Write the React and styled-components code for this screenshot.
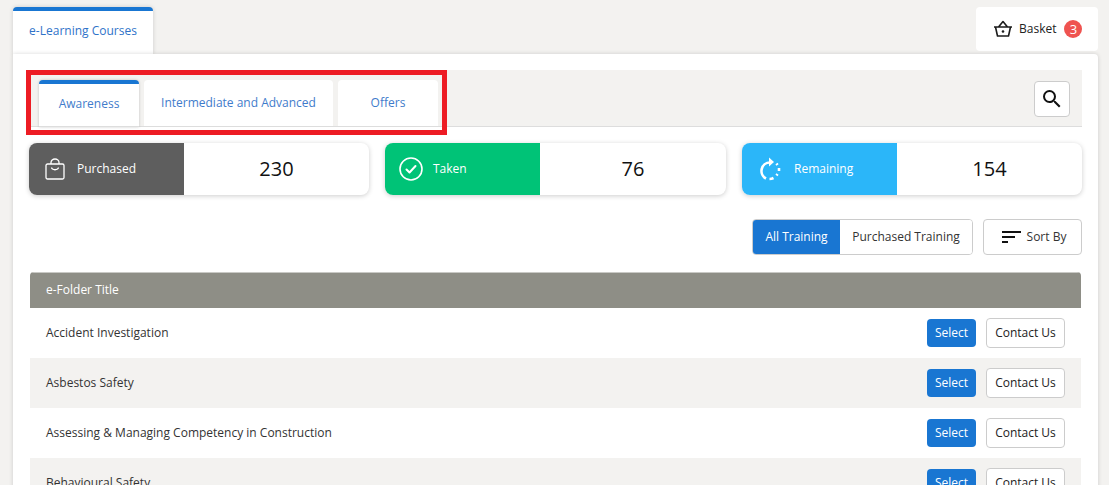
import styled, { createGlobalStyle } from "styled-components";
import { MdSearch } from "react-icons/md";

const GlobalStyle = createGlobalStyle`
  html, body {
    margin: 0;
    height: 485px;
    overflow: hidden;
    background: #f3f2f0;
    font-family: "Open Sans", "Liberation Sans", sans-serif;
    font-size: 12px;
    color: #222;
  }
  * {
    box-sizing: border-box;
  }
`;

const Page = styled.div`
  padding: 7px 11px 0 13px;
`;

const TopBar = styled.div`
  display: flex;
  justify-content: space-between;
  align-items: flex-start;
  height: 47px;
`;

const MainTab = styled.div`
  display: flex;
  align-items: center;
  justify-content: center;
  width: 140px;
  height: 47px;
  padding-bottom: 4px;
  background: #fff;
  border-top: 4px solid #1976d2;
  border-radius: 4px 4px 0 0;
  box-shadow: 0 0 4px rgba(0, 0, 0, 0.16);
  color: #2f73c9;
  position: relative;
  z-index: 1;
`;

const BasketBox = styled.div`
  display: flex;
  align-items: center;
  width: 122px;
  height: 44px;
  padding-left: 17px;
  background: #fff;
  border-radius: 4px;
`;

const BasketLabel = styled.span`
  margin-left: 6px;
  margin-bottom: 1px;
  color: #222;
`;

const Badge = styled.span`
  display: flex;
  align-items: center;
  justify-content: center;
  width: 18px;
  height: 18px;
  margin-left: 8px;
  border-radius: 50%;
  background: #ef5350;
  color: #fff;
  font-size: 13px;
`;

const Panel = styled.div`
  position: relative;
  z-index: 2;
  height: 440px;
  padding: 16px 16px 0;
  background: #fff;
  border-radius: 0 4px 0 0;
  box-shadow: 0 0 4px rgba(0, 0, 0, 0.16);
`;

const TabBar = styled.div`
  display: flex;
  justify-content: space-between;
  height: 57px;
  padding: 10px 12px 0 10px;
  background: #f3f2f0;
  border-bottom: 1px solid #ddd;
`;

const Tabs = styled.div`
  display: flex;
  gap: 5px;
`;

const SubTab = styled.div`
  display: flex;
  align-items: center;
  justify-content: center;
  width: ${(props) => props.$width}px;
  height: 47px;
  padding-bottom: ${(props) => (props.$active ? "4px" : "2px")};
  background: #fff;
  border-top: ${(props) => (props.$active ? "4px solid #1976d2" : "none")};
  border-bottom: 1px solid #ddd;
  border-radius: 4px 4px 0 0;
  box-shadow: ${(props) => (props.$active ? "0 0 3px rgba(0, 0, 0, 0.2)" : "none")};
  color: #3f7ccb;
`;

const SearchButton = styled.button`
  display: flex;
  align-items: center;
  justify-content: center;
  width: 36px;
  height: 36px;
  margin-top: 1px;
  padding: 0;
  background: #fff;
  border: 1px solid #ccc;
  border-radius: 4px;
  color: #111;
  font-size: 24px;
`;

const Highlight = styled.div`
  position: absolute;
  left: 13px;
  top: 16px;
  width: 421px;
  height: 65px;
  border: 5px solid #ed1c24;
  pointer-events: none;
`;

const Stats = styled.div`
  display: flex;
  justify-content: space-between;
  margin-top: 16px;
`;

const StatCard = styled.div`
  display: flex;
  width: ${(props) => props.$width}px;
  height: 52px;
  border-radius: 8px;
  background: #fff;
  overflow: hidden;
  box-shadow: 0 1px 5px rgba(0, 0, 0, 0.2);
`;

const StatLabel = styled.div`
  display: flex;
  align-items: center;
  flex: 0 0 155px;
  padding-left: ${(props) => props.$pad}px;
  gap: ${(props) => props.$gap}px;
  background: ${(props) => props.$bg};
  color: #fff;
`;

const StatText = styled.span`
  margin-bottom: 2px;
`;

const StatValue = styled.div`
  flex: 1;
  display: flex;
  align-items: center;
  justify-content: center;
  padding-bottom: 2px;
  font-size: 20px;
  font-weight: 500;
  color: #111;
`;

const Filters = styled.div`
  display: flex;
  justify-content: flex-end;
  gap: 10px;
  margin-top: 24px;
`;

const Segmented = styled.div`
  display: flex;
  height: 36px;
  border: 1px solid #ccc;
  border-radius: 4px;
  overflow: hidden;
`;

const Segment = styled.div`
  display: flex;
  align-items: center;
  justify-content: center;
  width: ${(props) => props.$width}px;
  padding-bottom: 1px;
  background: ${(props) => (props.$active ? "#1976d2" : "#fff")};
  color: ${(props) => (props.$active ? "#fff" : "#333")};
`;

const SortButton = styled.div`
  display: flex;
  align-items: center;
  justify-content: center;
  gap: 6px;
  width: 99px;
  height: 36px;
  padding-left: 3px;
  border: 1px solid #ccc;
  border-radius: 4px;
  color: #333;
`;

const SortText = styled.span`
  margin-bottom: 1px;
`;

const Table = styled.div`
  margin: 17px 1px 0;
  border-radius: 4px 4px 0 0;
  overflow: hidden;
`;

const TableHead = styled.div`
  display: flex;
  align-items: center;
  height: 36px;
  padding: 0 0 3px 16px;
  background: #8e8e86;
  border-top: 1px solid #c9c9c5;
  color: #fff;
`;

const TableRow = styled.div`
  display: flex;
  align-items: center;
  justify-content: space-between;
  height: 50px;
  padding: 0 16px;
  background: ${(props) => (props.$odd ? "#f3f2f0" : "#fff")};
  color: #333;
`;

const RowName = styled.span`
  margin-bottom: 1px;
`;

const RowActions = styled.div`
  display: flex;
  align-items: center;
  gap: 10px;
`;

const SelectButton = styled.button`
  width: 49px;
  height: 28px;
  padding: 0 0 1px;
  border: none;
  border-radius: 4px;
  background: #1976d2;
  color: #fff;
  font: inherit;
`;

const ContactButton = styled.button`
  width: 79px;
  height: 30px;
  padding: 0 0 1px;
  border: 1px solid #ccc;
  border-radius: 4px;
  background: #fff;
  color: #222;
  font: inherit;
`;

const BasketIcon = () => (
  <svg width="20" height="18" viewBox="0 0 20 18" fill="none" stroke="#1c1c1c" strokeWidth="1.6">
    <path d="M1 7h18M2.500 7l2 9h11l2-9M5.500 7l4.500-5.500L14.500 7" strokeLinejoin="round" />
    <circle cx="10" cy="11.500" r="1.300" fill="#1c1c1c" stroke="none" />
  </svg>
);

const BagIcon = () => (
  <svg width="20" height="22" viewBox="0 0 20 22" fill="none" stroke="#fff" strokeWidth="1.300">
    <rect x="1" y="6" width="18" height="15" rx="1.500" />
    <path d="M6 6V4.500a4 3.500 0 0 1 8 0V6M6.500 9.500c.5 3 6.500 3 7 0" />
  </svg>
);

const CheckIcon = () => (
  <svg width="24" height="24" viewBox="0 0 24 24" fill="none" stroke="#fff">
    <circle cx="12" cy="12" r="11" strokeWidth="1.600" />
    <path d="M7.500 12.500l3 3 6-6.500" strokeWidth="2" strokeLinecap="round" strokeLinejoin="round" />
  </svg>
);

const RefreshIcon = () => (
  <svg width="22" height="24" viewBox="0 0 22 24" fill="none" stroke="#fff" strokeWidth="2.600">
    <path d="M11 5.500a8.500 8.500 0 0 0-4 16" />
    <path d="M10 .5v9l5-4.500z" fill="#fff" stroke="none" />
    <path d="M10.500 22a8.500 8.500 0 0 0 4-1M17.500 18.500l1-1.500M20 14v-3M18.500 8l-1-1.500" />
  </svg>
);

const SortIcon = () => (
  <svg width="19" height="12" viewBox="0 0 19 12" fill="#111">
    <rect x="0" y="0" width="19" height="2" />
    <rect x="0" y="5" width="13" height="2" />
    <rect x="0" y="10" width="6" height="2" />
  </svg>
);

const courses = [
  "Accident Investigation",
  "Asbestos Safety",
  "Assessing & Managing Competency in Construction",
  "Behavioural Safety",
];

const App = () => {
  return (
    <Page>
      <GlobalStyle />
      <TopBar>
        <MainTab>e-Learning Courses</MainTab>
        <BasketBox>
          <BasketIcon />
          <BasketLabel>Basket</BasketLabel>
          <Badge>3</Badge>
        </BasketBox>
      </TopBar>
      <Panel>
        <TabBar>
          <Tabs>
            <SubTab $width={100} $active>
              Awareness
            </SubTab>
            <SubTab $width={189}>Intermediate and Advanced</SubTab>
            <SubTab $width={100}>Offers</SubTab>
          </Tabs>
          <SearchButton>
            <MdSearch />
          </SearchButton>
        </TabBar>
        <Highlight />
        <Stats>
          <StatCard $width={340}>
            <StatLabel $bg="#5e5e5e" $pad={16} $gap={12}>
              <BagIcon />
              <StatText>Purchased</StatText>
            </StatLabel>
            <StatValue>230</StatValue>
          </StatCard>
          <StatCard $width={341}>
            <StatLabel $bg="#00c377" $pad={14} $gap={10}>
              <CheckIcon />
              <StatText>Taken</StatText>
            </StatLabel>
            <StatValue>76</StatValue>
          </StatCard>
          <StatCard $width={340}>
            <StatLabel $bg="#2bb6f9" $pad={17} $gap={13}>
              <RefreshIcon />
              <StatText>Remaining</StatText>
            </StatLabel>
            <StatValue>154</StatValue>
          </StatCard>
        </Stats>
        <Filters>
          <Segmented>
            <Segment $width={87} $active>
              All Training
            </Segment>
            <Segment $width={132}>Purchased Training</Segment>
          </Segmented>
          <SortButton>
            <SortIcon />
            <SortText>Sort By</SortText>
          </SortButton>
        </Filters>
        <Table>
          <TableHead>e-Folder Title</TableHead>
          {courses.map((course, i) => (
            <TableRow key={course} $odd={i % 2 === 1}>
              <RowName>{course}</RowName>
              <RowActions>
                <SelectButton>Select</SelectButton>
                <ContactButton>Contact Us</ContactButton>
              </RowActions>
            </TableRow>
          ))}
        </Table>
      </Panel>
    </Page>
  );
};

export default App;
